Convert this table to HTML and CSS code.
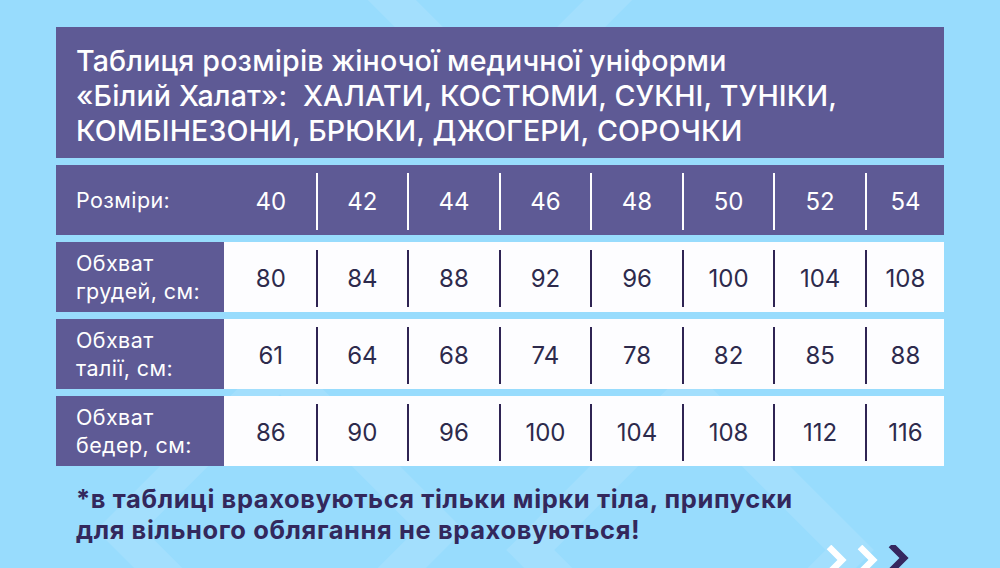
FILE: index.html
```html
<!DOCTYPE html>
<html lang="uk">
<head>
<meta charset="utf-8">
<link rel="stylesheet" href="styles.css">
</head>
<body>
<div class="page">
  <div class="deco deco-a"></div>
  <div class="deco deco-b"></div>
  <div class="deco deco-c"></div>
  <main class="card">
    <h1 class="title">Таблиця розмірів жіночої медичної уніформи<br>«Білий Халат»:&nbsp; ХАЛАТИ, КОСТЮМИ, СУКНІ, ТУНІКИ,<br>КОМБІНЕЗОНИ, БРЮКИ, ДЖОГЕРИ, СОРОЧКИ</h1>
    <div class="row row-head">
      <div class="label">Розміри:</div>
      <div class="cell first"><span>40</span></div>
      <div class="cell"><span>42</span></div>
      <div class="cell"><span>44</span></div>
      <div class="cell"><span>46</span></div>
      <div class="cell"><span>48</span></div>
      <div class="cell"><span>50</span></div>
      <div class="cell"><span>52</span></div>
      <div class="cell"><span>54</span></div>
    </div>
    <div class="row">
      <div class="label">Обхват<br>грудей, см:</div>
      <div class="cell first"><span>80</span></div>
      <div class="cell"><span>84</span></div>
      <div class="cell"><span>88</span></div>
      <div class="cell"><span>92</span></div>
      <div class="cell"><span>96</span></div>
      <div class="cell"><span>100</span></div>
      <div class="cell"><span>104</span></div>
      <div class="cell"><span>108</span></div>
    </div>
    <div class="row">
      <div class="label">Обхват<br>талії, см:</div>
      <div class="cell first"><span>61</span></div>
      <div class="cell"><span>64</span></div>
      <div class="cell"><span>68</span></div>
      <div class="cell"><span>74</span></div>
      <div class="cell"><span>78</span></div>
      <div class="cell"><span>82</span></div>
      <div class="cell"><span>85</span></div>
      <div class="cell"><span>88</span></div>
    </div>
    <div class="row">
      <div class="label">Обхват<br>бедер, см:</div>
      <div class="cell first"><span>86</span></div>
      <div class="cell"><span>90</span></div>
      <div class="cell"><span>96</span></div>
      <div class="cell"><span>100</span></div>
      <div class="cell"><span>104</span></div>
      <div class="cell"><span>108</span></div>
      <div class="cell"><span>112</span></div>
      <div class="cell"><span>116</span></div>
    </div>
    <p class="note">*в таблиці враховуються тільки мірки тіла, припуски<br>для вільного облягання не враховуються!</p>
  </main>
  <svg class="chevrons" width="100" height="30" viewBox="0 0 100 30">
    <polyline points="3,2 16,15 3,28" fill="none" stroke="#ffffff" stroke-width="6.5"/>
    <polyline points="34,2 47,15 34,28" fill="none" stroke="#ffffff" stroke-width="6.5"/>
    <polyline points="65,0 78,13 65,26" fill="none" stroke="#35275f" stroke-width="6.5"/>
  </svg>
</div>
</body>
</html>
```

FILE: styles.css
```css
* { box-sizing: border-box; }
html, body { margin: 0; padding: 0; }
body {
  width: 1000px;
  height: 568px;
  overflow: hidden;
  background: #98dcfd;
  font-family: Inter, "Noto Sans", sans-serif;
}
.page {
  position: relative;
  width: 1000px;
  height: 568px;
  overflow: hidden;
  background: #98dcfd;
}
.deco {
  position: absolute;
  transform: rotate(45deg);
  border: 34px solid rgba(255, 255, 255, 0.11);
}
.deco-a { width: 300px; height: 300px; left: 350px; top: -230px; }
.deco-b { width: 260px; height: 260px; left: 150px; top: 400px; }
.deco-c { width: 260px; height: 260px; left: 560px; top: 420px; }
.card {
  position: relative;
  margin-left: 56px;
  padding-top: 27px;
  width: 888px;
}
.title {
  margin: 0;
  height: 131px;
  background: #5e5a95;
  color: #ffffff;
  font-size: 28.6px;
  font-weight: 500;
  line-height: 35px;
  letter-spacing: 0.15px;
  padding: 5px 20px 0;
  display: flex;
  align-items: center;
}
.row {
  margin-top: 7px;
  height: 70px;
  display: grid;
  grid-template-columns: 168px repeat(7, 91.57px) 79px;
  background: #fdfdff;
  color: #2d2a4c;
}
.row-head { background: #5e5a95; color: #ffffff; }
.label {
  background: #5e5a95;
  color: #ffffff;
  font-size: 21.5px;
  line-height: 28px;
  letter-spacing: 0.4px;
  padding-left: 20px;
  display: flex;
  align-items: center;
}
.cell {
  padding: 8px 0 5px;
  font-size: 24px;
}
.cell span {
  display: flex;
  height: 100%;
  align-items: center;
  justify-content: center;
  border-left: 2.5px solid #2f2453;
}
.row-head .cell span { border-left-color: #ffffff; }
.cell.first span { border-left-color: transparent; }
.note {
  margin: 17px 0 0 20px;
  color: #33285c;
  font-size: 25.5px;
  font-weight: 700;
  line-height: 31px;
  letter-spacing: 0.6px;
}
.chevrons {
  position: absolute;
  left: 826px;
  top: 545px;
}
```
